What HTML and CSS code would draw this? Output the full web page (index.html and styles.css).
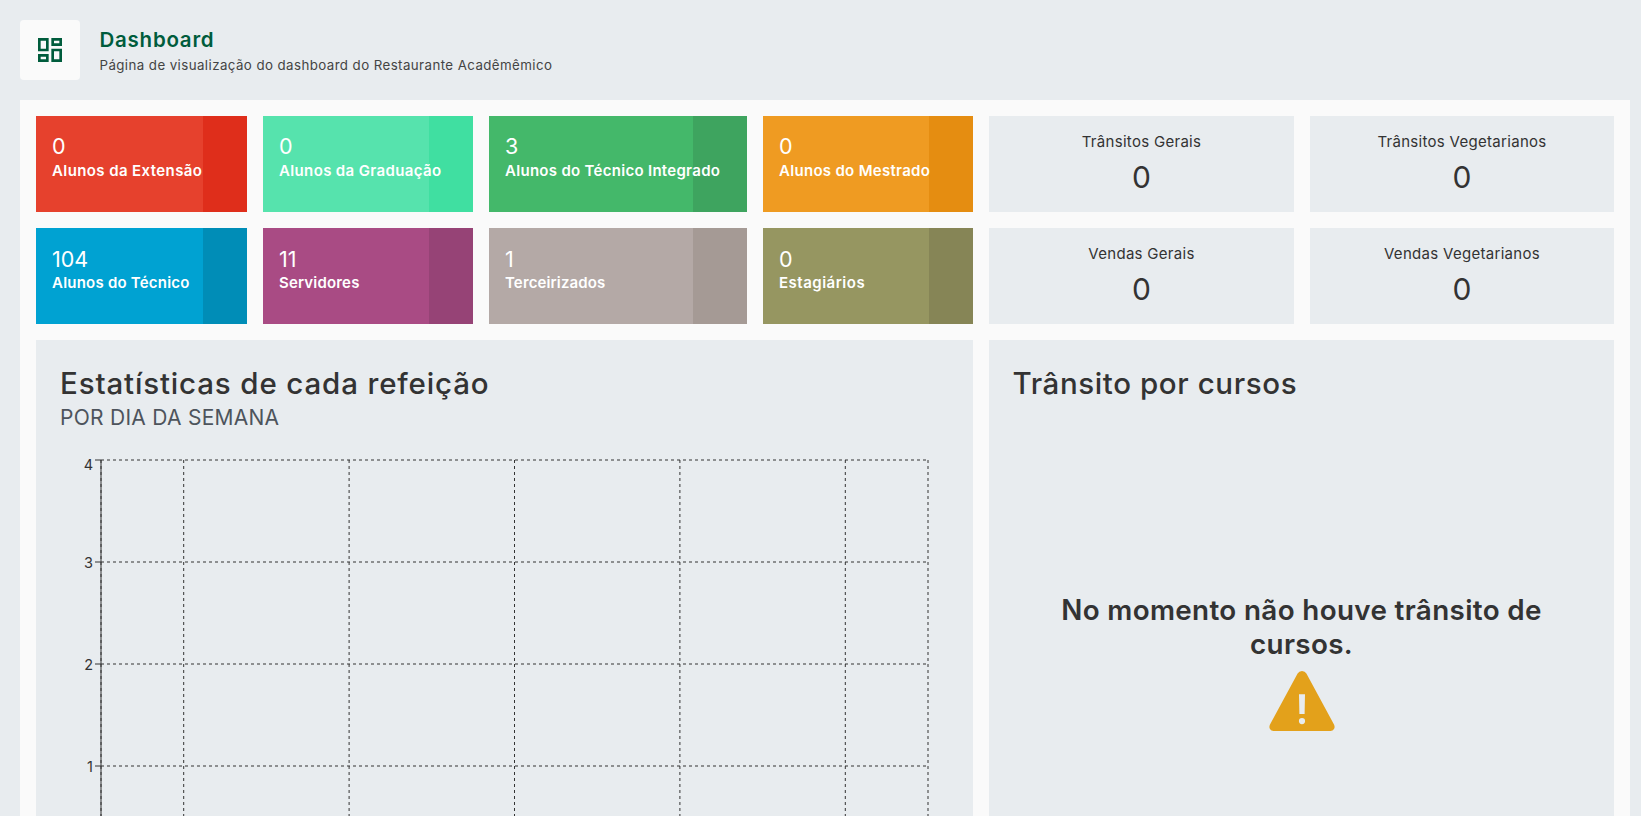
FILE: index.html
```html
<!DOCTYPE html>
<html lang="pt-BR">
<head>
<meta charset="utf-8">
<title>Dashboard</title>
<link rel="stylesheet" href="styles.css">
</head>
<body>
<header class="page-header">
  <div class="header-icon">
    <svg width="32" height="32" viewBox="0 0 24 24"><path fill="#005c3c" d="M19 5v2h-4V5h4M9 5v6H5V5h4m10 8v6h-4v-6h4M9 17v2H5v-2h4M21 3h-8v6h8V3zM11 3H3v10h8V3zm10 8h-8v10h8V11zm-10 4H3v6h8v-6z"/></svg>
  </div>
  <div class="header-text">
    <h1 class="page-title">Dashboard</h1>
    <p class="page-subtitle">Página de visualização do dashboard do Restaurante Acadêmêmico</p>
  </div>
</header>
<main class="board">
  <section class="card red"><div class="count">0</div><div class="label">Alunos da Extensão</div></section>
  <section class="card mint"><div class="count">0</div><div class="label">Alunos da Graduação</div></section>
  <section class="card green"><div class="count">3</div><div class="label">Alunos do Técnico Integrado</div></section>
  <section class="card orange"><div class="count">0</div><div class="label">Alunos do Mestrado</div></section>
  <section class="stat"><div class="stat-label">Trânsitos Gerais</div><div class="stat-value">0</div></section>
  <section class="stat"><div class="stat-label">Trânsitos Vegetarianos</div><div class="stat-value">0</div></section>
  <section class="card blue lower"><div class="count">104</div><div class="label">Alunos do Técnico</div></section>
  <section class="card purple lower"><div class="count">11</div><div class="label">Servidores</div></section>
  <section class="card taupe lower"><div class="count">1</div><div class="label">Terceirizados</div></section>
  <section class="card olive lower"><div class="count">0</div><div class="label">Estagiários</div></section>
  <section class="stat"><div class="stat-label">Vendas Gerais</div><div class="stat-value">0</div></section>
  <section class="stat"><div class="stat-label">Vendas Vegetarianos</div><div class="stat-value">0</div></section>
  <section class="panel meals">
    <h2 class="panel-title">Estatísticas de cada refeição</h2>
    <p class="panel-subtitle">POR DIA DA SEMANA</p>
    <svg class="chart" width="889" height="361" viewBox="60 455 889 361">
      <g class="grid">
        <path d="M101 460H928M101 562H928M101 664H928M101 766H928"/>
        <path d="M101 460V816"/><path d="M183.7 460V816"/><path d="M349.1 460V816"/><path d="M514.5 460V816"/><path d="M679.9 460V816"/><path d="M845.3 460V816"/><path d="M928 460V816"/>
      </g>
      <path class="axis" d="M101 460V816M95 460H101M95 562H101M95 664H101M95 766H101"/>
      <g class="ticks"><text x="93" y="469.500">4</text><text x="93" y="568">3</text><text x="93" y="670">2</text><text x="93" y="772">1</text></g>
    </svg>
  </section>
  <section class="panel courses">
    <h2 class="panel-title courses-title">Trânsito por cursos</h2>
    <div class="empty">
      <p class="empty-text">No momento não houve trânsito de cursos.</p>
      <svg width="66" height="60" viewBox="0 0 66 60"><path fill="#e3a11b" fill-rule="evenodd" d="M28.6 2.6Q30 0 33 0T37.4 2.6L65 53.5Q66.2 56 65 58T61.5 60H4.5Q2.200 60 1 58T1 53.500ZM30 23.200L30.400 43H35.600L36 23.200ZM33 47A3.100 3.100 0 1 0 33 53.200A3.100 3.100 0 1 0 33 47Z"/></svg>
    </div>
  </section>
</main>
</body>
</html>
```
FILE: styles.css
```css
* { box-sizing: border-box; margin: 0; padding: 0; }
body { height: 816px; overflow: hidden; background: #e8ecef; color: #333; font-family: Inter, Roboto, sans-serif; font-size: 15px; }
.page-header { display: flex; gap: 20px; height: 100px; padding: 20px; }
.header-icon { width: 60px; height: 60px; display: grid; place-items: center; background: #fafafa; border-radius: 4px; }
.header-text { padding-top: 6px; margin-left: -0.5px; white-space: nowrap; }
.page-title { font-size: 20.5px; font-weight: 600; line-height: 28px; letter-spacing: 0.75px; color: #005c3c; }
.page-subtitle { font-size: 13.3px; font-weight: 400; line-height: 22px; letter-spacing: 0.42px; color: #444; }
.board { display: grid; grid-template-columns: 211fr 210fr 258fr 210fr 305fr 304fr; grid-template-rows: 96px 96px 476px; gap: 16px; width: 1610px; height: 716px; margin-left: 20px; padding: 16px 16px 0; background: #fafafa; }
.card { padding: 17px 16px; color: #fff; white-space: nowrap; background: linear-gradient(to right, var(--main) 79%, var(--edge) 79%); }
.red { --main: #e6412d; --edge: #df2e1b; --track: 0.4px; }
.mint { --main: #56e3ad; --edge: #40dfa1; --track: 0.36px; }
.green { --main: #44b86a; --edge: #3ea45f; --track: 0.29px; }
.orange { --main: #ef9b22; --edge: #e58d11; --track: 0.3px; }
.blue { --main: #00a2d2; --edge: #008db7; --track: 0.22px; }
.purple { --main: #a94b84; --edge: #964376; --track: 0.18px; }
.taupe { --main: #b4a9a6; --edge: #a59a95; --track: 0.14px; }
.olive { --main: #969661; --edge: #868556; --track: 0.5px; }
.count { font-size: 21.5px; line-height: 27px; }
.label { font-size: 15px; font-weight: 600; line-height: 22px; letter-spacing: var(--track); }
.lower { padding-top: 18px; }
.lower .label { line-height: 20px; }
.stat { padding-top: 15px; background: #e8ecef; text-align: center; }
.stat-label { line-height: 22px; letter-spacing: 0.3px; }
.stat-value { font-size: 30px; line-height: 49px; }
.panel { background: #e8ecef; padding: 24px 24px 0; }
.meals { grid-column: span 4; }
.courses { grid-column: span 2; }
.panel-title { font-size: 29.5px; font-weight: 450; line-height: 38px; padding-bottom: 2px; letter-spacing: 0.85px; white-space: nowrap; }
.courses-title { letter-spacing: 0.6px; margin-left: -0.5px; }
.panel-subtitle { font-size: 21px; line-height: 27px; letter-spacing: 0.27px; color: #4d545c; }
.chart { display: block; margin-top: 24px; }
.grid path { fill: none; stroke: #333; stroke-dasharray: 3 3; }
.axis { fill: none; stroke: #333; }
.ticks { font-size: 14.5px; fill: #333; text-anchor: end; }
.empty { display: flex; flex-direction: column; align-items: center; padding-top: 189px; }
.empty-text { width: 520px; font-size: 27.8px; font-weight: 600; line-height: 34px; letter-spacing: 0.35px; text-align: center; margin-bottom: 10px; }
```
